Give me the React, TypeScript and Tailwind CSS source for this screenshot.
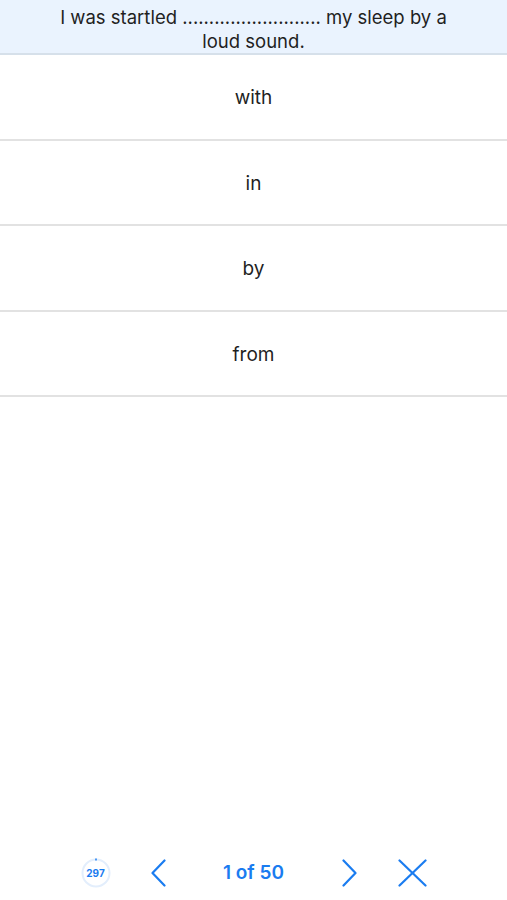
import React from "react";

const options = ["with", "in", "by", "from"];

export default function App() {
    return (
        <div className="min-h-[900px] flex flex-col bg-white text-[#1f1f1f]" style={{ fontFamily: "Inter, 'Liberation Sans', sans-serif" }}>
            {/* Question */}
            <div className="bg-[#eaf3fe] border-b-2 border-[#d6e0ea] px-[58px] pt-[5px] text-center text-[18.5px] leading-[24px]">
                I was startled .......................... my sleep by a loud sound.
            </div>

            {/* Answers */}
            <div className="flex flex-col">
                {options.map((o) => (
                    <button key={o} className="h-[85.5px] pt-[3px] flex items-center justify-center border-b-2 border-[#e2e2e2] text-[19px]">
                        {o}
                    </button>
                ))}
            </div>

            <div className="flex-1" />

            {/* Footer */}
            <div className="h-[54px] flex items-center justify-center text-[#1a7cf0]">
                <div className="relative w-[30px] h-[30px] flex items-center justify-center">
                    <svg className="absolute inset-0" width="30" height="30" viewBox="0 0 30 30">
                        <circle cx="15" cy="15" r="13.5" fill="none" stroke="#e3eefc" strokeWidth="2" />
                        <line x1="15" y1="0.5" x2="15" y2="2.5" stroke="#1a7cf0" strokeWidth="1.5" />
                    </svg>
                    <span className="relative text-[10px] font-bold">297</span>
                </div>
                <button className="ml-[40px] w-[15px] h-[28px]">
                    <svg width="15" height="28" viewBox="0 0 15 28" fill="none" stroke="currentColor" strokeWidth="2.2" strokeLinecap="round" strokeLinejoin="round">
                        <polyline points="13.5,1.5 1.5,14 13.5,26.5" />
                    </svg>
                </button>
                <div className="mx-[38px] w-[100px] text-center text-[19px] font-semibold">1 of 50</div>
                <button className="w-[15px] h-[28px]">
                    <svg width="15" height="28" viewBox="0 0 15 28" fill="none" stroke="currentColor" strokeWidth="2.2" strokeLinecap="round" strokeLinejoin="round">
                        <polyline points="1.5,1.5 13.5,14 1.5,26.5" />
                    </svg>
                </button>
                <button className="ml-[41px] w-[29px] h-[28px]">
                    <svg width="29" height="28" viewBox="0 0 29 28" fill="none" stroke="currentColor" strokeWidth="2.2" strokeLinecap="round">
                        <line x1="1.5" y1="1.5" x2="27.5" y2="26.5" />
                        <line x1="27.5" y1="1.5" x2="1.5" y2="26.5" />
                    </svg>
                </button>
            </div>
        </div>
    );
}
